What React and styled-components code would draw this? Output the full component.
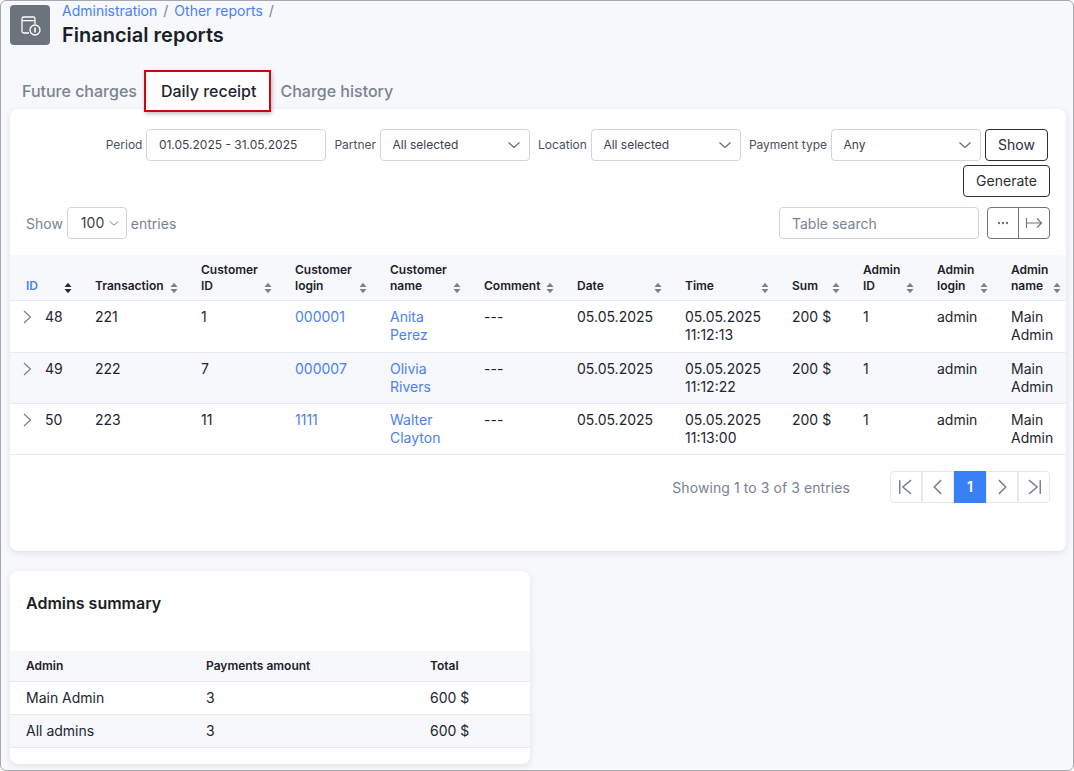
import React from 'react'
import styled, { createGlobalStyle, css } from 'styled-components'

const GlobalStyle = createGlobalStyle`
  html, body {
    margin: 0;
    padding: 0;
    background: #fff;
  }
  * {
    box-sizing: border-box;
  }
`

const linkBlue = '#4b7ff5'
const textDark = '#212530'
const muted = '#7a8292'
const line = '#cfd6e0'
const rule = '#e6e9ef'
const tint = '#f6f8fb'

const Frame = styled.div`
  width: 1074px;
  height: 771px;
  overflow: hidden;
  padding: 4px 7px 0 9px;
  background: ${tint};
  border: 1px solid #a6a8ab;
  border-radius: 6px;
  font-family: Inter, 'Liberation Sans', sans-serif;
  font-size: 14px;
  line-height: 18px;
  color: ${textDark};
`

const Header = styled.header`
  display: flex;
  gap: 12px;
  height: 40px;
`

const HeaderIcon = styled.div`
  width: 40px;
  height: 40px;
  display: flex;
  align-items: center;
  justify-content: center;
  border-radius: 4px;
  background: #6b737d;
`

const TitleBlock = styled.div`
  margin-top: -4px;
`

const Crumbs = styled.div`
  display: flex;
  gap: 6px;
  height: 20px;
  line-height: 20px;
  color: ${muted};
`

const Crumb = styled.a`
  color: ${linkBlue};
`

const Title = styled.h1`
  margin: 0;
  font-size: 20px;
  line-height: 28px;
  font-weight: 600;
  color: #1b1f27;
`

const Tabs = styled.div`
  display: flex;
  height: 40px;
  margin-top: 25px;
`

const Tab = styled.div`
  position: relative;
  padding: 0 12px;
  height: 40px;
  line-height: 43px;
  font-size: 16px;
  font-weight: 500;
  color: ${muted};
  ${({ $active }) => $active && css`
    background: #fff;
    color: ${textDark};
    border-radius: 6px 6px 0 0;
    &::after {
      content: '';
      position: absolute;
      top: 0;
      bottom: -2px;
      left: -5px;
      right: -3px;
      border: 2px solid #c70a0a;
      box-shadow: 1px 2px 4px rgba(0, 0, 0, 0.25);
    }
  `}
`

const Card = styled.section`
  background: #fff;
  border-radius: 8px;
  box-shadow: 0 2px 6px rgba(60, 70, 90, 0.12);
`

const MainCard = styled(Card)`
  height: 442px;
  margin-top: -1px;
  padding-top: 20px;
`

const FilterRow = styled.div`
  display: flex;
  justify-content: flex-end;
  align-items: center;
  padding-right: 18px;
`

const Field = styled.label`
  display: flex;
  align-items: center;
  gap: 4px;
  margin-left: 8px;
  font-size: 12px;
  color: #4a5160;
`

const Control = styled.div`
  display: flex;
  align-items: center;
  justify-content: space-between;
  width: ${({ $w }) => $w}px;
  height: 32px;
  padding: 0 7px 0 11.5px;
  border: 1px solid ${line};
  border-radius: 4px;
  background: #fff;
  font-size: 12px;
  color: #3b4150;
`

const Button = styled.button`
  height: 32px;
  padding: 0 0 2px;
  width: ${({ $w }) => $w}px;
  margin-left: ${({ $ml }) => $ml || 0}px;
  border: 1px solid #2b2f38;
  border-radius: 4px;
  background: #fff;
  font-family: inherit;
  font-size: 14px;
  color: #2b2f38;
`

const GenerateRow = styled.div`
  display: flex;
  justify-content: flex-end;
  margin-top: 4px;
  padding-right: 16px;
`

const ToolRow = styled.div`
  display: flex;
  align-items: center;
  justify-content: space-between;
  margin-top: 10px;
  padding: 0 16px;
`

const Entries = styled.div`
  display: flex;
  align-items: center;
  gap: 4px;
  color: ${muted};
`

const EntriesText = styled.span`
  padding-top: 2px;
`

const PageSize = styled.div`
  display: flex;
  align-items: center;
  justify-content: space-between;
  width: 60px;
  height: 32px;
  padding: 0 5px 1px 13px;
  border: 1px solid ${line};
  border-radius: 4px;
  color: #3b4150;
`

const ToolRight = styled.div`
  display: flex;
  gap: 8px;
`

const Search = styled.div`
  width: 200px;
  height: 32px;
  padding: 0 12px;
  line-height: 32px;
  border: 1px solid ${line};
  border-radius: 4px;
  color: ${muted};
`

const ButtonGroup = styled.div`
  display: flex;
  width: 63px;
  height: 32px;
  border: 1px solid #6d7480;
  border-radius: 4px;
`

const GroupCell = styled.div`
  flex: 1;
  display: flex;
  align-items: center;
  justify-content: center;
  & + & {
    border-left: 1px solid #6d7480;
  }
`

const TableWrap = styled.div`
  margin-top: 16px;
  overflow: hidden;
`

const DataTable = styled.table`
  width: ${({ $w }) => $w}px;
  table-layout: fixed;
  border-collapse: collapse;
`

const Col = styled.col`
  width: ${({ $w }) => $w}px;
`

const HeadRow = styled.tr`
  height: ${({ $h }) => $h}px;
  background: ${tint};
  border-bottom: 1px solid ${rule};
`

const Th = styled.th`
  padding: 0 16px;
  font-size: 12px;
  line-height: 16px;
  font-weight: 600;
  text-align: left;
  color: #1d2129;
`

const SortTh = styled.th`
  padding: 7px 7px 6px 16px;
  vertical-align: bottom;
  font-size: 12px;
  line-height: 16px;
  font-weight: 600;
  text-align: left;
  color: ${({ $active }) => ($active ? linkBlue : '#1d2129')};
`

const ThInner = styled.div`
  display: flex;
  align-items: flex-end;
  justify-content: space-between;
`

const Row = styled.tr`
  height: ${({ $h }) => $h}px;
  border-bottom: 1px solid ${rule};
  background: ${({ $tinted }) => ($tinted ? tint : '#fff')};
`

const Td = styled.td`
  padding: 7px 8px 7px 16px;
  vertical-align: top;
`

const IdCell = styled.div`
  display: flex;
  align-items: center;
  gap: 9px;
  margin-left: -6px;
`

const SummaryTd = styled.td`
  padding: 0 16px;
`

const Link = styled.a`
  color: ${linkBlue};
`

const Footer = styled.div`
  display: flex;
  justify-content: flex-end;
  align-items: center;
  gap: 40px;
  padding: 16px 16px 0;
`

const Info = styled.div`
  margin-top: 1px;
  letter-spacing: 0.08px;
  color: ${muted};
`

const Pager = styled.div`
  display: flex;
  height: 32px;
`

const PageBtn = styled.div`
  width: 32px;
  display: flex;
  align-items: center;
  justify-content: center;
  font-weight: 600;
  font-size: 14px;
  color: #fff;
  border: 1px solid ${({ $active }) => ($active ? '#397ff5' : rule)};
  background: ${({ $active }) => ($active ? '#397ff5' : 'transparent')};
  &:first-child {
    border-radius: 4px 0 0 4px;
  }
  &:last-child {
    border-radius: 0 4px 4px 0;
  }
`

const SummaryCard = styled(Card)`
  width: 520px;
  height: 193px;
  margin-top: 20px;
`

const SummaryTitle = styled.h2`
  margin: 0;
  height: 80px;
  padding: 21px 16px 0;
  font-size: 16px;
  line-height: 22px;
  font-weight: 600;
  color: #1b1f27;
`

const Chevron = ({ size = 16, color = '#7a8292', weight = 1.1, d = 'M5 13l6-5-6-5' }) => (
  <svg width={size} height={size} viewBox="0 0 16 16" fill="none" stroke={color} strokeWidth={weight}>
    <path d={d} />
  </svg>
)

const Caret = () => <Chevron d="M2.500 5.500L8 10.500l5.500-5" color="#5f6673" />

const SortIcon = ({ active }) => (
  <svg width="8" height="12" viewBox="0 0 8 12">
    <path d="M4 .8L7.500 5H.5z" fill={active ? '#262a33' : '#7d838e'} />
    <path d="M4 11.200L.5 7h7z" fill={active ? '#262a33' : '#7d838e'} />
  </svg>
)

const WindowIcon = () => (
  <svg width="22" height="22" viewBox="0 0 22 22" fill="none" stroke="#fff" strokeWidth="1.300">
    <path d="M10 19H4.800A1.800 1.800 0 0 1 3 17.200V4.800A1.800 1.800 0 0 1 4.800 3h9.400A1.800 1.800 0 0 1 16 4.800V10" />
    <path d="M3 6.700h13" />
    <circle cx="16" cy="16" r="5" />
    <path d="M16 13.500v5" strokeWidth="1.600" />
  </svg>
)

const columns = [
  { w: 69, label: ['ID'], active: true },
  { w: 106, label: ['Transaction'] },
  { w: 94, label: ['Customer', 'ID'] },
  { w: 95, label: ['Customer', 'login'] },
  { w: 94, label: ['Customer', 'name'] },
  { w: 93, label: ['Comment'] },
  { w: 108, label: ['Date'] },
  { w: 107, label: ['Time'] },
  { w: 71, label: ['Sum'] },
  { w: 74, label: ['Admin', 'ID'] },
  { w: 74, label: ['Admin', 'login'] },
  { w: 73, label: ['Admin', 'name'] },
]

const rows = [
  { id: 48, tx: 221, cid: 1, login: '000001', name: ['Anita', 'Perez'], time: '11:12:13' },
  { id: 49, tx: 222, cid: 7, login: '000007', name: ['Olivia', 'Rivers'], time: '11:12:22' },
  { id: 50, tx: 223, cid: 11, login: '1111', name: ['Walter', 'Clayton'], time: '11:13:00' },
]

const Lines = ({ items }) => items.map((item, i) => (
  <React.Fragment key={item}>
    {i > 0 && <br />}
    {item}
  </React.Fragment>
))

const pagerIcons = [
  <Chevron key="first" size={20} weight={1.2} d="M3 2.500v11M12 2.500L5.500 8l6.500 5.500" />,
  <Chevron key="prev" size={20} weight={1.2} d="M10.500 2.500L5 8l5.500 5.500" />,
  '1',
  <Chevron key="next" size={20} weight={1.2} d="M5.500 2.500L11 8l-5.500 5.500" />,
  <Chevron key="last" size={20} weight={1.2} d="M13 2.500v11M4 2.500L10.500 8 4 13.500" />,
]

const App = () => (
  <Frame>
    <GlobalStyle />
    <Header>
      <HeaderIcon><WindowIcon /></HeaderIcon>
      <TitleBlock>
        <Crumbs>
          <Crumb>Administration</Crumb>/<Crumb>Other reports</Crumb>/
        </Crumbs>
        <Title>Financial reports</Title>
      </TitleBlock>
    </Header>

    <Tabs>
      <Tab>Future charges</Tab>
      <Tab $active>Daily receipt</Tab>
      <Tab>Charge history</Tab>
    </Tabs>

    <MainCard>
      <FilterRow>
        <Field>Period<Control $w={180}>01.05.2025 - 31.05.2025</Control></Field>
        <Field>Partner<Control $w={150}>All selected<Caret /></Control></Field>
        <Field>Location<Control $w={150}>All selected<Caret /></Control></Field>
        <Field>Payment type<Control $w={150}>Any<Caret /></Control></Field>
        <Button $w={63} $ml={4}>Show</Button>
      </FilterRow>
      <GenerateRow>
        <Button $w={87}>Generate</Button>
      </GenerateRow>
      <ToolRow>
        <Entries>
          <EntriesText>Show</EntriesText>
          <PageSize>100<Chevron size={14} d="M3 6l5 4.500L13 6" /></PageSize>
          <EntriesText>entries</EntriesText>
        </Entries>
        <ToolRight>
          <Search>Table search</Search>
          <ButtonGroup>
            <GroupCell>
              <svg width="12" height="4" viewBox="0 0 12 4" fill="#6d7480">
                <circle cx="2" cy="2" r="1.200" />
                <circle cx="6" cy="2" r="1.200" />
                <circle cx="10" cy="2" r="1.200" />
              </svg>
            </GroupCell>
            <GroupCell>
              <svg width="18" height="14" viewBox="0 0 18 14" fill="none" stroke="#6d7480" strokeWidth="1.100">
                <path d="M1.500 2v10M1.500 7H16.500M12 2.500L16.500 7 12 11.500" />
              </svg>
            </GroupCell>
          </ButtonGroup>
        </ToolRight>
      </ToolRow>

      <TableWrap>
        <DataTable $w={1058}>
          <colgroup>
            {columns.map((col) => <Col key={col.label.join()} $w={col.w} />)}
          </colgroup>
          <thead>
            <HeadRow $h={45}>
              {columns.map((col) => (
                <SortTh key={col.label.join()} $active={col.active}>
                  <ThInner>
                    <span><Lines items={col.label} /></span>
                    <SortIcon active={col.active} />
                  </ThInner>
                </SortTh>
              ))}
            </HeadRow>
          </thead>
          <tbody>
            {rows.map((row, i) => (
              <Row key={row.id} $h={i === 0 ? 52 : 51} $tinted={i === 1}>
                <Td>
                  <IdCell>
                    <Chevron size={16} weight={1.2} d="M4 2L10.500 8 4 14" />
                    {row.id}
                  </IdCell>
                </Td>
                <Td>{row.tx}</Td>
                <Td>{row.cid}</Td>
                <Td><Link>{row.login}</Link></Td>
                <Td><Link><Lines items={row.name} /></Link></Td>
                <Td>---</Td>
                <Td>05.05.2025</Td>
                <Td>05.05.2025<br />{row.time}</Td>
                <Td>200 $</Td>
                <Td>1</Td>
                <Td>admin</Td>
                <Td>Main<br />Admin</Td>
              </Row>
            ))}
          </tbody>
        </DataTable>
      </TableWrap>

      <Footer>
        <Info>Showing 1 to 3 of 3 entries</Info>
        <Pager>
          {pagerIcons.map((icon, i) => (
            <PageBtn key={i} $active={icon === '1'}>{icon}</PageBtn>
          ))}
        </Pager>
      </Footer>
    </MainCard>

    <SummaryCard>
      <SummaryTitle>Admins summary</SummaryTitle>
      <DataTable $w={520}>
        <colgroup>
          <Col $w={180} />
          <Col $w={224} />
          <Col $w={116} />
        </colgroup>
        <thead>
          <HeadRow $h={30}>
            <Th>Admin</Th>
            <Th>Payments amount</Th>
            <Th>Total</Th>
          </HeadRow>
        </thead>
        <tbody>
          <Row $h={33}>
            <SummaryTd>Main Admin</SummaryTd>
            <SummaryTd>3</SummaryTd>
            <SummaryTd>600 $</SummaryTd>
          </Row>
          <Row $h={33} $tinted>
            <SummaryTd>All admins</SummaryTd>
            <SummaryTd>3</SummaryTd>
            <SummaryTd>600 $</SummaryTd>
          </Row>
        </tbody>
      </DataTable>
    </SummaryCard>
  </Frame>
)

export default App
